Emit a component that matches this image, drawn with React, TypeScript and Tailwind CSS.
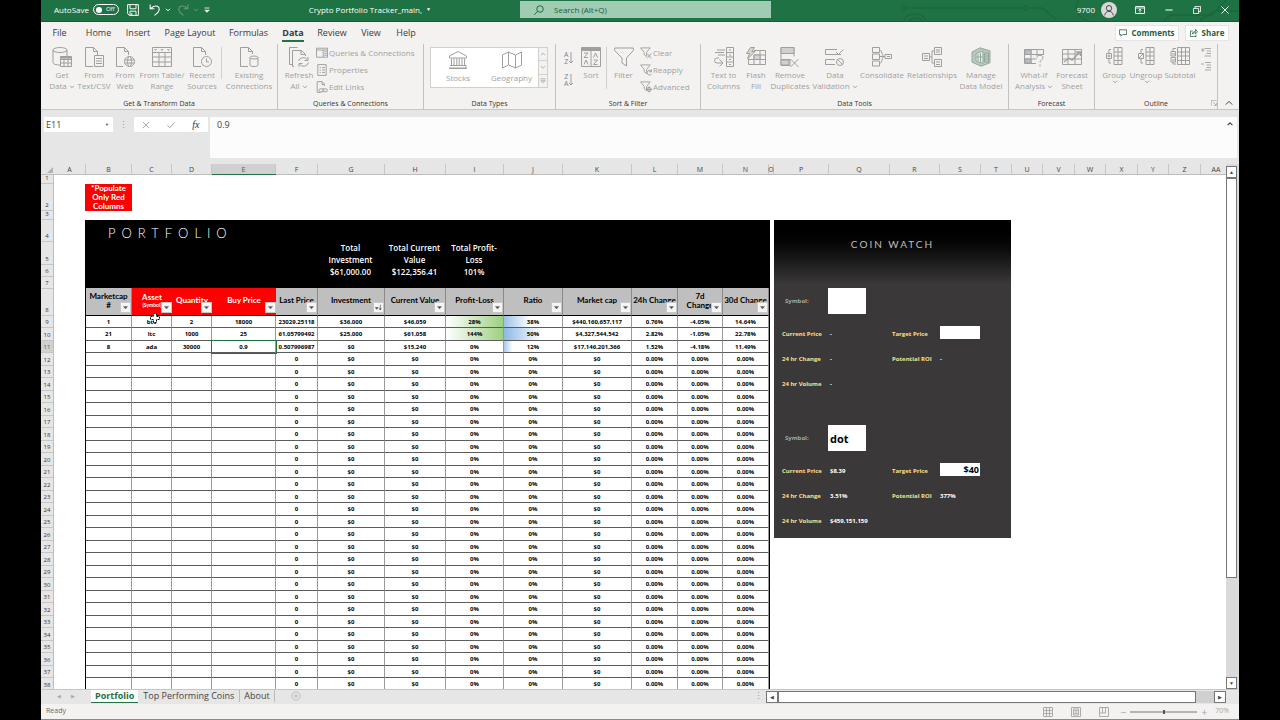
import type { ReactNode } from "react"
import { clsx } from "clsx"

type IconProps = {
  children: ReactNode
  className?: string
}

function Icon({ children, className = "size-5" }: IconProps) {
  return (
    <svg
      viewBox="0 0 20 20"
      fill="none"
      stroke="currentColor"
      strokeWidth="1"
      aria-hidden="true"
      className={clsx("shrink-0", className)}
    >
      {children}
    </svg>
  )
}

const icons = {
  getData: (
    <Icon>
      <ellipse cx="8" cy="3" rx="7" ry="2.500" />
      <path d="M1 3v12.500c0 1.500 3 2.500 7 2.500M15 3v6" />
      <path d="M8.500 9.500h11v10h-11zM8.500 12.500h11M8.500 16h11M12 9.500v10M16 9.500v10" />
      <path d="M8.500 10.500h11" strokeWidth="2" />
    </Icon>
  ),
  fromText: (
    <Icon>
      <path d="M9 19.500H1.500V.5h8l4 4V8M9.500.5v4h4" />
      <path d="M10.500 8.500h9v11h-9zM12 11.500h6M12 14h6M12 16.500h6" />
    </Icon>
  ),
  fromWeb: (
    <Icon>
      <path d="M8 19.500H1.500V.5h8l4 4V8M9.500.5v4h4" />
      <circle cx="14.500" cy="14.500" r="5" />
      <ellipse cx="14.500" cy="14.500" rx="2" ry="5" />
      <path d="M9.500 13h10M9.500 16h10" />
    </Icon>
  ),
  fromTable: (
    <Icon>
      <path d="M.5.5h19v19H.5zM.5 5.500h19M.5 10h19M.5 15h19M7 5v14.500M13 5v14.500" />
      <path d="m2.500 2 1 1.500 1-1.500M9 2l1 1.500L11 2M15.500 2l1 1.500 1-1.500" />
    </Icon>
  ),
  recent: (
    <Icon>
      <path d="M9 19.500H1.500V.5h8l4 4V8M9.500.5v4h4" />
      <circle cx="14.500" cy="14.500" r="5" />
      <path d="M14.500 11.500v3.500h2.500" />
    </Icon>
  ),
  existing: (
    <Icon>
      <path d="M9 19.500H1.500V.5h8l4 4V7M9.500.5v4h4" />
      <ellipse cx="15" cy="10.500" rx="4" ry="1.500" />
      <path d="M11 10.500v7.500c0 1 1.500 1.500 4 1.500s4-.5 4-1.500v-7.500" />
    </Icon>
  ),
  refresh: (
    <Icon>
      <path d="M3 17.500H.5V.5h8M5 19.500H3.500v-16h9l4 4V9M12 3.500v4h4" />
      <path d="M9.500 14a5 5 0 0 1 9-1M19 10v3.500h-3.500M19.500 15.500a5 5 0 0 1-9 1.500M10 19.800v-3.300h3.500" />
    </Icon>
  ),
  queries: (
    <Icon className="size-3">
      <path d="M.8 2h18.400v15H.8zM.8 5h18.400M12 5v12" strokeWidth="1.600" />
      <path d="M14 8h4M14 11h4M14 14h4" strokeWidth="1.600" />
    </Icon>
  ),
  properties: (
    <Icon className="size-3">
      <path d="M3 1h14v18H3zM6 6h2M10 6h5M6 10h2M10 10h5M6 14h2M10 14h5" strokeWidth="1.600" />
    </Icon>
  ),
  editLinks: (
    <Icon className="size-3">
      <path d="M8 19H2V1h8l4 4v3M10 1v5h4" strokeWidth="1.600" />
      <rect x="5" y="13" width="8" height="5" rx="2.500" strokeWidth="1.600" />
      <rect x="11" y="13" width="8" height="5" rx="2.500" strokeWidth="1.600" />
    </Icon>
  ),
  stocks: (
    <Icon>
      <path d="m10 1.500 8.500 4.500v2h-17V6zM3.500 8.500v7M6 8.500v7M8.800 8.500v7M11.200 8.500v7M14 8.500v7M16.500 8.500v7M2 15.500h16v2.500H1M1 18.500h18" />
    </Icon>
  ),
  geography: (
    <Icon>
      <path d="M.5 5 6.500 2l7 3 6-3v13l-6 3-7-3-6 3zM6.500 2v13M13.500 5v13" />
    </Icon>
  ),
  sort: (
    <Icon>
      <path d="M.5.500h19v19H.5zM.5 3.500h19M10 3.500v16" />
      <path d="M1 2h18" strokeWidth="2" />
      <path d="M3 6h4l-4 4.500h4M3 17.500 5 13l2 4.500M12.500 10.500l2-4.500 2 4.500M12.500 13h4l-4 4.500h4" />
    </Icon>
  ),
  filter: (
    <Icon>
      <path d="M.7 1h18.600v2.500L12.500 11v8L8 16v-5L.7 3.500z" />
    </Icon>
  ),
  textToColumns: (
    <Icon>
      <path d="M12.500.5h7v19h-7zM12.500 5.500h7M12.500 10h7M12.500 15h7M15 3h2M15 8h2M15 12.500h2M15 17.500h2M3 3h8M1 5.500h9M4 8h7" />
      <path d="M5 11H3a2.500 2.500 0 0 0 0 5h5M5.500 12.500 9 16l-3.500 3.500" />
    </Icon>
  ),
  flashFill: (
    <Icon>
      <path d="M8 3.500h11.500v14h-17V12M2.500 12.500h17M8 8h11.500M8 8v9.500M14 3.500v14" />
      <path d="M8 8h6v4.500H8z" fill="#cdd4dc" />
      <path d="M4.500.5h4L6 4.500h3L1.500 12l2-5.500h-3z" fill="#ddd3c4" />
    </Icon>
  ),
  removeDuplicates: (
    <Icon>
      <path d="M1 .5h13v6H1zM1 12.500h9v6H1zM1 6.500v6M14 6.500v3" />
      <path d="M1 .5h13v6H1z" fill="#d0d0d0" />
      <path d="M1 13h8v5H1z" fill="#d0d0d0" />
      <path d="m10.500 12 8 8M18.500 12l-8 8" />
    </Icon>
  ),
  dataValidation: (
    <Icon>
      <path d="M12 2.500H.5v5H16M18.500 2.500l-5 5-2.500-2.500M10 12.500H.5v5H10" />
      <circle cx="15" cy="15" r="3.500" />
      <path d="m12.500 12.500 5 5" />
    </Icon>
  ),
  consolidate: (
    <Icon>
      <path d="M.5.5h7v5h-7zM.5 7h7v5.500h-7zM.5 14h7v5h-7zM13 7.500h6.500v4H13zM7.500 3c3 0 2 6.500 5 6.500M7.500 16.500c3 0 2-7 5-7M7.500 9.500H13M15 9.500h3" />
    </Icon>
  ),
  relationships: (
    <Icon>
      <path d="M.5 6.500h7v7h-7zM12.500.5h7v7h-7zM12.500 12.500h7v7h-7zM7.500 10H10V4h2.500M10 10v6h2.500M2 9h4M2 11.500h4M14 3h4M14 5h4M14 15h4M14 17.500h4" />
    </Icon>
  ),
  manageModel: (
    <Icon>
      <path d="M1 5 9 .8l10 3v12l-9 3.400-9-4z" fill="#b9c9be" stroke="#94a99c" />
      <path d="M5 6.500 12 4v12.500L5 14z" fill="#e5ece7" stroke="#94a99c" />
      <path d="M7 7v7M9.500 6v9M5 10h7M13.500 6h4v9h-4zM13.500 9h4M13.500 12h4" stroke="#94a99c" />
    </Icon>
  ),
  whatIf: (
    <Icon>
      <path d="M12 16.500H.5v-14h19V8M.5 7.500h19M.5 12h12M7 2.500v14M13 2.500V9" />
      <path d="M1 3h6v4.500H1zM1 12h6v4H1z" fill="#b9bfca" />
      <path d="M13 10.500c0-3 6-3 6 0 0 2.500-3 2-3 5M16 17.500v2" />
    </Icon>
  ),
  forecastSheet: (
    <Icon>
      <path d="M.5 2.500h19v15H.5zM.5 7h19M.5 12h19M6 2.500v15M13 2.500v15" />
      <path d="m2 15 5-4 3 2 8-8M14 5h4.500v4" strokeWidth="1.400" />
    </Icon>
  ),
  group: (
    <Icon>
      <path d="M10 .5h8v17h-8zM10 5h8M10 9h8M10 13.500h8M14 .5v17M7 2.500H5v4M5 12v4h2M2.500 6.500h5v5h-5zM3.500 9h3M5 7.500v3" />
    </Icon>
  ),
  ungroup: (
    <Icon>
      <path d="M10 .5h8v17h-8zM10 5h8M10 9h8M10 13.500h8M14 .5v17M7 2.500H5v4M5 12v4h2M2.500 6.500h5v5h-5zM2.500 11.500l5-5" />
    </Icon>
  ),
  subtotal: (
    <Icon>
      <path d="M7.500.5h12v17h-12zM7.500 5h12M7.500 9h12M7.500 13.500h12M11.500.5v17M15.500.5v17M6 1.500H3v3M3 15v2h3M1 4.500h4.500V9H1zM1 10.500h4.500V15H1zM2 7h3M2 13h3" />
    </Icon>
  ),
}

function SmallFilter({ children }: { children: ReactNode }) {
  return (
    <Icon className="size-3">
      <path d="M1 1.500h16L11 9v7l-4-3V9z" strokeWidth="1.500" />
      <g strokeWidth="1.600">{children}</g>
    </Icon>
  )
}

function Chevron() {
  return (
    <svg viewBox="0 0 6 4" fill="none" stroke="currentColor" className="ml-0.5 inline-block h-1 w-1.5" aria-hidden="true">
      <path d="m1 .8 2 2 2-2" />
    </svg>
  )
}

type BigButtonProps = {
  icon: ReactNode
  lines: string[]
  width: string
  menu?: boolean
}

function BigButton({ icon, lines, width, menu }: BigButtonProps) {
  return (
    <button type="button" className={clsx("flex shrink-0 flex-col items-center whitespace-nowrap", width)}>
      {icon}
      <span className="mt-0.5 flex flex-col items-center leading-[11px]">
        {lines.map((line, index) => (
          <span key={line}>
            {line}
            {menu && lines.length > 1 && index === lines.length - 1 && <Chevron />}
          </span>
        ))}
        {menu && lines.length === 1 && <Chevron />}
      </span>
    </button>
  )
}

function SmallButton({ icon, label }: { icon: ReactNode; label: string }) {
  return (
    <button type="button" className="flex h-3 items-center gap-px whitespace-nowrap">
      {icon}
      {label}
    </button>
  )
}

type RibbonGroupProps = {
  label: string
  width: string
  children: ReactNode
}

function RibbonGroup({ label, width, children }: RibbonGroupProps) {
  return (
    <section className={clsx("flex shrink-0 flex-col border-r border-[#c3c2c0]", width)}>
      <div className="flex h-[54px] items-start pt-[3px]">{children}</div>
      <h2 className="text-center text-[7px] leading-3 text-[#333]">{label}</h2>
    </section>
  )
}

function TitleBar() {
  return (
    <header className="relative flex h-[22px] shrink-0 items-center border-b border-[#1a5c38] bg-[#1f7244] pb-0.5 text-[8px] text-white">
      <svg
        viewBox="0 0 340 21"
        fill="none"
        stroke="#1b683d"
        strokeWidth="1.500"
        className="absolute top-0 right-0 h-[21px] w-[340px]"
        aria-hidden="true"
      >
        <circle cx="5" cy="8" r="2" />
        <path d="M7 8h116M129 8h14l15 12M5 20c4-8 18-8 22 0M10 21c3-4 10-4 13 0" />
        <circle cx="126" cy="8" r="2" />
        <path d="M180 0c-6 8 0 20 10 21M265 21l6-6h42l14-15M300 21l16-10h24" />
      </svg>
      <div className="relative flex w-[479px] shrink-0 items-center pl-[13px]">
        <span id="autosave">AutoSave</span>
        <button
          type="button"
          role="switch"
          aria-checked="false"
          aria-labelledby="autosave"
          className="ml-1 flex h-[11px] w-[26px] items-center gap-1 rounded-full border border-white pl-0.5 text-[6px]"
        >
          <span className="size-1.5 rounded-full bg-white" />
          Off
        </button>
        <button type="button" aria-label="Save" className="ml-2">
          <Icon className="size-3">
            <path d="M1 1h18v18H4l-3-3zM5 1v7h10V1M5 19v-7h10v7M8 15v4" strokeWidth="1.600" />
          </Icon>
        </button>
        <button type="button" aria-label="Undo" className="ml-2.5 flex items-center gap-0.5">
          <Icon className="size-3">
            <path d="M2 1v7h7M2.500 8C8 1 17 2 17 9c0 4-3 6-8 10" strokeWidth="1.800" />
          </Icon>
          <Chevron />
        </button>
        <button type="button" aria-label="Redo" className="ml-1.5 flex items-center gap-0.5 opacity-30">
          <Icon className="size-3">
            <path d="M18 1v7h-7M17.500 8C12 1 3 2 3 9c0 4 3 6 8 10" strokeWidth="1.800" />
          </Icon>
          <Chevron />
        </button>
        <button type="button" aria-label="Customize toolbar" className="ml-1">
          <Icon className="size-2">
            <path d="M4 5h12" strokeWidth="2" />
            <path d="M4 10h12l-6 6z" fill="currentColor" />
          </Icon>
        </button>
        <button type="button" className="mr-[89px] ml-auto flex items-center gap-1 whitespace-nowrap">
          Crypto Portfolio Tracker_main,
          <span className="text-[5px]">▼</span>
        </button>
      </div>
      <label className="relative flex h-[17px] w-[251px] items-center gap-2.5 bg-[#9fccb2] pl-3.5 text-[#1c5e39]">
        <Icon className="size-2.5">
          <circle cx="12" cy="8" r="6.500" strokeWidth="1.800" />
          <path d="m7.500 12.500-7 7" strokeWidth="1.800" />
        </Icon>
        <input
          aria-label="Search"
          placeholder="Search (Alt+Q)"
          className="w-full bg-transparent outline-none placeholder:text-[#1c5e39]"
        />
      </label>
      <div className="relative ml-auto flex items-center pr-2.5">
        <span>9700</span>
        <span className="ml-1.5 grid size-4 place-items-center rounded-full bg-[#d9d9d9] text-[#444]">
          <Icon className="size-3">
            <circle cx="10" cy="7" r="4.500" strokeWidth="1.600" />
            <path d="M3 19c0-9 14-9 14 0" strokeWidth="1.600" />
          </Icon>
        </span>
        <button type="button" aria-label="Ribbon display" className="ml-[18px]">
          <Icon className="size-2.5">
            <path d="M1 3h18v14H1zM1 6h18M10 15V8M7 11l3-3 3 3" strokeWidth="1.800" />
          </Icon>
        </button>
        <button type="button" aria-label="Minimize" className="ml-5">
          <Icon className="size-2">
            <path d="M1 10h18" strokeWidth="2.500" />
          </Icon>
        </button>
        <button type="button" aria-label="Restore" className="ml-5">
          <Icon className="size-2">
            <path d="M1 6h13v13H1zM5 6V1h14v13h-5" strokeWidth="2.200" />
          </Icon>
        </button>
        <button type="button" aria-label="Close" className="ml-5">
          <Icon className="size-2">
            <path d="m1 1 18 18M19 1 1 19" strokeWidth="2.400" />
          </Icon>
        </button>
      </div>
    </header>
  )
}

const menuTabs = [
  { label: "File", width: "w-[37px]" },
  { label: "Home", width: "w-[41px]" },
  { label: "Insert", width: "w-[38px]" },
  { label: "Page Layout", width: "w-[66px]" },
  { label: "Formulas", width: "w-[51px]" },
  { label: "Data", width: "w-[38px]" },
  { label: "Review", width: "w-[40px]" },
  { label: "View", width: "w-[38px]" },
  { label: "Help", width: "w-[32px]" },
]

function MenuTabs() {
  return (
    <nav className="flex h-[22px] shrink-0 items-center pt-px text-[9px] text-[#3b3a39]">
      {menuTabs.map((tab) => (
        <a key={tab.label} href="#" className={clsx("flex justify-center whitespace-nowrap", tab.width)}>
          <span
            className={clsx(
              "border-b-2 leading-[14px]",
              tab.label === "Data" ? "border-[#217346] font-bold" : "border-transparent",
            )}
          >
            {tab.label}
          </span>
        </a>
      ))}
      <div className="ml-auto flex gap-1.5 pr-2.5 pb-px text-[8px] font-bold text-[#1f5f3c]">
        <button type="button" className="flex h-4 w-16 items-center justify-center gap-1 border border-[#e5e5e5] bg-white">
          <Icon className="size-2">
            <path d="M1 2h18v12H9l-4 4v-4H1z" strokeWidth="2" />
          </Icon>
          Comments
        </button>
        <button type="button" className="flex h-4 w-11 items-center justify-center gap-1 border border-[#e5e5e5] bg-white">
          <Icon className="size-2">
            <path d="M7 5H1v14h14v-5M6 13c0-5 4-7 8-7V1l5 6-5 5V9c-4 0-6 1-8 4z" strokeWidth="2" />
          </Icon>
          Share
        </button>
      </div>
    </nav>
  )
}

function SortArrow({ from, to }: { from: string; to: string }) {
  return (
    <span className="flex items-center">
      <span className="flex flex-col text-[7px] leading-[7px] text-[#75859a]">
        <span>{from}</span>
        <span>{to}</span>
      </span>
      <svg viewBox="0 0 6 12" fill="none" stroke="currentColor" className="h-3 w-1.5" aria-hidden="true">
        <path d="M3 0v11M1 9l2 2 2-2" />
      </svg>
    </span>
  )
}

function Ribbon() {
  return (
    <div className="flex h-[66px] shrink-0 items-start overflow-hidden border-b border-[#c8c6c4] text-[8px] text-[#a19f9d]">
      <RibbonGroup label="Get & Transform Data" width="w-[237px]">
        <BigButton icon={icons.getData} lines={["Get", "Data"]} width="w-[38px] pl-1" menu />
        <BigButton icon={icons.fromText} lines={["From", "Text/CSV"]} width="w-[30px]" />
        <BigButton icon={icons.fromWeb} lines={["From", "Web"]} width="w-[32px]" />
        <BigButton icon={icons.fromTable} lines={["From Table/", "Range"]} width="w-[42px]" />
        <BigButton icon={icons.recent} lines={["Recent", "Sources"]} width="w-[38px]" />
        <span className="h-8 w-px bg-[#d2d0ce]" />
        <BigButton icon={icons.existing} lines={["Existing", "Connections"]} width="w-[54px]" />
      </RibbonGroup>
      <RibbonGroup label="Queries & Connections" width="w-[146px]">
        <BigButton icon={icons.refresh} lines={["Refresh", "All"]} width="w-[38px] pl-1" menu />
        <div className="flex flex-col gap-[5px]">
          <SmallButton icon={icons.queries} label="Queries & Connections" />
          <SmallButton icon={icons.properties} label="Properties" />
          <SmallButton icon={icons.editLinks} label="Edit Links" />
        </div>
      </RibbonGroup>
      <RibbonGroup label="Data Types" width="w-[132px]">
        <div className="ml-1.5 flex h-[41px] border border-[#d2d0ce] bg-white">
          <div className="flex pt-0.5">
            <BigButton icon={icons.stocks} lines={["Stocks"]} width="w-[54px]" />
            <BigButton icon={icons.geography} lines={["Geography"]} width="w-[53px]" />
          </div>
          <div className="flex w-[9px] flex-col divide-y divide-[#d2d0ce] border-l border-[#d2d0ce] bg-[#f3f2f1]">
            <button type="button" aria-label="Previous types" className="grid flex-1 place-items-center">
              <Icon className="size-1.5"><path d="m3 14 7-7 7 7" strokeWidth="2.500" /></Icon>
            </button>
            <button type="button" aria-label="Next types" className="grid flex-1 place-items-center">
              <Icon className="size-1.5"><path d="m3 7 7 7 7-7" strokeWidth="2.500" /></Icon>
            </button>
            <button type="button" aria-label="More types" className="grid flex-1 place-items-center">
              <Icon className="size-1.5"><path d="M1 3h18M3 9l7 7 7-7z" strokeWidth="2.500" /></Icon>
            </button>
          </div>
        </div>
      </RibbonGroup>
      <RibbonGroup label="Sort & Filter" width="w-[145px]">
        <div className="flex w-5 flex-col gap-2 pt-1 pl-2">
          <button type="button" aria-label="Sort A to Z"><SortArrow from="A" to="Z" /></button>
          <button type="button" aria-label="Sort Z to A"><SortArrow from="Z" to="A" /></button>
        </div>
        <BigButton icon={icons.sort} lines={["Sort"]} width="w-[30px]" />
        <span className="h-[42px] w-px bg-[#d2d0ce]" />
        <BigButton icon={icons.filter} lines={["Filter"]} width="w-[33px]" />
        <div className="flex flex-col gap-[5px]">
          <SmallButton icon={<SmallFilter><path d="m12 11 7 8M19 11l-7 8" /></SmallFilter>} label="Clear" />
          <SmallButton icon={<SmallFilter><path d="M19 12a4 4 0 1 0 0 5M19 9v4h-4" /></SmallFilter>} label="Reapply" />
          <SmallButton icon={<SmallFilter><circle cx="15" cy="14" r="3.500" /><path d="M15 9v10M10 14h10" /></SmallFilter>} label="Advanced" />
        </div>
      </RibbonGroup>
      <RibbonGroup label="Data Tools" width="w-[308px]">
        <BigButton icon={icons.textToColumns} lines={["Text to", "Columns"]} width="w-[45px]" />
        <BigButton icon={icons.flashFill} lines={["Flash", "Fill"]} width="w-[20px]" />
        <BigButton icon={icons.removeDuplicates} lines={["Remove", "Duplicates"]} width="w-[48px]" />
        <BigButton icon={icons.dataValidation} lines={["Data", "Validation"]} width="w-[42px]" menu />
        <BigButton icon={icons.consolidate} lines={["Consolidate"]} width="w-[52px]" />
        <BigButton icon={icons.relationships} lines={["Relationships"]} width="w-[48px]" />
        <BigButton icon={icons.manageModel} lines={["Manage", "Data Model"]} width="w-[50px]" />
      </RibbonGroup>
      <RibbonGroup label="Forecast" width="w-[86px]">
        <BigButton icon={icons.whatIf} lines={["What-If", "Analysis"]} width="w-[50px]" menu />
        <BigButton icon={icons.forecastSheet} lines={["Forecast", "Sheet"]} width="w-[26px]" />
      </RibbonGroup>
      <RibbonGroup label="Outline" width="w-[123px]">
        <BigButton icon={icons.group} lines={["Group"]} width="w-[38px]" menu />
        <BigButton icon={icons.ungroup} lines={["Ungroup"]} width="w-[26px]" menu />
        <BigButton icon={icons.subtotal} lines={["Subtotal"]} width="w-[42px]" />
        <div className="flex flex-col gap-1">
          <button type="button" aria-label="Show detail">
            <Icon className="size-2.5"><path d="M0 6h7M3.500 2.500v7M7 3h13M11 8h9M11 13h9M7 18h13" strokeWidth="1.800" /></Icon>
          </button>
          <button type="button" aria-label="Hide detail">
            <Icon className="size-2.5"><path d="M0 6h6M8 3h12M11 8h9M11 13h9M8 18h12" strokeWidth="1.800" /></Icon>
          </button>
        </div>
        <button type="button" aria-label="Outline settings" className="-mb-2 self-end">
          <Icon className="size-1.5"><path d="M1 19V1h18M7 7l11 11M18 9v9H9" strokeWidth="2.400" /></Icon>
        </button>
      </RibbonGroup>
      <button type="button" aria-label="Collapse ribbon" className="ml-auto self-end pr-1.5 pb-0.5 text-[#444]">
        <Icon className="size-2"><path d="m2 14 8-8 8 8" strokeWidth="2.500" /></Icon>
      </button>
    </div>
  )
}

function FormulaBar() {
  return (
    <div className="flex h-[54px] shrink-0 items-start gap-0.5 bg-[#e6e6e6] pt-[7px] pr-0.5 pl-[3px] text-[9px] text-[#444]">
      <div className="flex h-[15px] w-[69px] items-center bg-white pr-1">
        <input aria-label="Name box" defaultValue="E11" className="w-full min-w-0 pl-0.5 outline-none" />
        <span className="text-[4px]">▼</span>
      </div>
      <span className="w-[17px] text-center leading-[15px] text-[#999]">⋮</span>
      <div className="flex h-[15px] w-[74px] items-center justify-around bg-white text-[#999]">
        <button type="button" aria-label="Cancel">
          <Icon className="size-2"><path d="m2 2 16 16M18 2 2 18" strokeWidth="2" /></Icon>
        </button>
        <button type="button" aria-label="Enter">
          <Icon className="size-2"><path d="m1 11 6 6L19 3" strokeWidth="2.200" /></Icon>
        </button>
        <button type="button" className="font-['Liberation_Serif'] text-[10px] text-[#333] italic">fx</button>
      </div>
      <div className="flex h-[41px] flex-1 items-start bg-[#fcfcfc]">
        <textarea
          aria-label="Formula"
          defaultValue="0.9"
          className="h-full flex-1 resize-none py-0.5 pl-[7px] leading-3 outline-none"
        />
        <button type="button" aria-label="Collapse formula bar" className="pt-1 pr-1">
          <Icon className="size-1.5"><path d="m2 14 8-8 8 8" strokeWidth="4" /></Icon>
        </button>
      </div>
    </div>
  )
}

const columns = [
  { name: "A", width: "w-[32px]" },
  { name: "B", width: "w-[46px]" },
  { name: "C", width: "w-[40px]" },
  { name: "D", width: "w-[40px]" },
  { name: "E", width: "w-[64px]" },
  { name: "F", width: "w-[42px]" },
  { name: "G", width: "w-[67px]" },
  { name: "H", width: "w-[61px]" },
  { name: "I", width: "w-[58px]" },
  { name: "J", width: "w-[59px]" },
  { name: "K", width: "w-[69px]" },
  { name: "L", width: "w-[46px]" },
  { name: "M", width: "w-[45px]" },
  { name: "N", width: "w-[46px]" },
  { name: "O", width: "w-[5px]" },
  { name: "P", width: "w-[55px]" },
  { name: "Q", width: "w-[61px]" },
  { name: "R", width: "w-[50px]" },
  { name: "S", width: "w-[41px]" },
  { name: "T", width: "w-[31px]" },
  { name: "U", width: "w-[31px]" },
  { name: "V", width: "w-[32px]" },
  { name: "W", width: "w-[31px]" },
  { name: "X", width: "w-[32px]" },
  { name: "Y", width: "w-[31px]" },
  { name: "Z", width: "w-[32px]" },
  { name: "AA", width: "w-[31px]" },
]

function ColumnHeaders() {
  return (
    <div className="flex h-[11px] shrink-0 border-b border-[#bdbdbd] bg-[#e6e6e6] text-[7px] leading-3 text-[#444]">
      <span className="flex w-[13px] shrink-0 items-end justify-end p-px">
        <svg viewBox="0 0 6 6" className="size-1.5" aria-hidden="true">
          <path d="M6 0v6H0z" fill="#b1b1b1" />
        </svg>
      </span>
      {columns.map((column) => (
        <span
          key={column.name}
          className={clsx(
            "flex shrink-0 justify-center border-r border-[#c6c6c6]",
            column.width,
            column.name === "E" && "bg-[#d0d0d0] text-[#217346] shadow-[0_1px_0_#217346]",
          )}
        >
          {column.name}
        </span>
      ))}
    </div>
  )
}

const topRows = ["h-[9px]", "h-[27px]", "h-[9px]", "h-[22px]", "h-[23px]", "h-[12px]", "h-[12px]", "h-[27px]"]
const bodyRowNumbers = Array.from({ length: 30 }, (_, index) => index + 9)

function bodyRowHeight(row: number) {
  return row % 2 === 1 ? "h-[12px]" : "h-[13px]"
}

function RowHeaders() {
  return (
    <div className="flex w-[13px] shrink-0 flex-col border-r border-[#bdbdbd] bg-[#e6e6e6] text-[6px] leading-[9px] text-[#333]">
      {[...topRows, ...bodyRowNumbers.map(bodyRowHeight)].map((height, index) => (
        <span
          key={index}
          className={clsx(
            "flex shrink-0 items-end justify-center border-b border-[#c6c6c6]",
            height,
            index === 10 && "bg-[#d0d0d0] text-[#217346]",
          )}
        >
          {index + 1}
        </span>
      ))}
    </div>
  )
}

type Holding = {
  rank: string
  symbol: string
  quantity: string
  buyPrice: string
  lastPrice: string
  investment: string
  value: string
  profit: string
  ratio: string
  marketCap: string
  day: string
  week: string
  month: string
}

const holdings: Holding[] = [
  {
    rank: "1", symbol: "btc", quantity: "2", buyPrice: "18000", lastPrice: "23029.25118",
    investment: "$36,000", value: "$46,059", profit: "28%", ratio: "38%",
    marketCap: "$440,160,657,117", day: "0.76%", week: "-4.05%", month: "14.64%",
  },
  {
    rank: "21", symbol: "ltc", quantity: "1000", buyPrice: "25", lastPrice: "61.05799492",
    investment: "$25,000", value: "$61,058", profit: "144%", ratio: "50%",
    marketCap: "$4,327,544,542", day: "2.82%", week: "-1.05%", month: "22.78%",
  },
  {
    rank: "8", symbol: "ada", quantity: "30000", buyPrice: "0.9", lastPrice: "0.507996987",
    investment: "$0", value: "$15,240", profit: "0%", ratio: "12%",
    marketCap: "$17,146,201,366", day: "1.52%", week: "-4.18%", month: "11.49%",
  },
]

const emptyHolding: Holding = {
  rank: "", symbol: "", quantity: "", buyPrice: "", lastPrice: "0",
  investment: "$0", value: "$0", profit: "0%", ratio: "0%",
  marketCap: "$0", day: "0.00%", week: "0.00%", month: "0.00%",
}

const fields = [
  { key: "rank", title: "Marketcap #", input: false },
  { key: "symbol", title: "Asset", note: "(Symbol)", input: true },
  { key: "quantity", title: "Quantity", input: true },
  { key: "buyPrice", title: "Buy Price", input: true },
  { key: "lastPrice", title: "Last Price", input: false },
  { key: "investment", title: "Investment", input: false },
  { key: "value", title: "Current Value", input: false },
  { key: "profit", title: "Profit-Loss", input: false },
  { key: "ratio", title: "Ratio", input: false },
  { key: "marketCap", title: "Market cap", input: false },
  { key: "day", title: "24h Change", input: false },
  { key: "week", title: "7d Change", input: false },
  { key: "month", title: "30d Change", input: false },
] as const

function FilterButton({ title, sorted }: { title: string; sorted: boolean }) {
  return (
    <button
      type="button"
      aria-label={`Filter ${title}`}
      className="absolute right-0 bottom-0.5 grid size-[11px] place-items-center border border-[#c8c8c8] bg-[#f5f5f5] text-[#555]"
    >
      <Icon className="size-[7px]">
        {sorted ? (
          <path d="M1 10h8l-4 5zM15 2v15M12 13l3 4 3-4" fill="currentColor" strokeWidth="2" />
        ) : (
          <path d="M4 7h12l-6 7z" fill="currentColor" />
        )}
      </Icon>
    </button>
  )
}

function Totals() {
  const totals = [
    { label: "Total Investment", value: "$61,000.00", width: "w-[67px]" },
    { label: "Total Current Value", value: "$122,356.41", width: "w-[61px]" },
    { label: "Total Profit-Loss", value: "101%", width: "w-[58px]" },
  ]
  return (
    <div className="h-[68px] bg-black text-white">
      <h1 className="pt-1 pl-[22px] font-['Lato'] text-[13px] leading-[18px] font-light tracking-[6px]">PORTFOLIO</h1>
      <dl className="ml-[231px] flex text-center text-[8px] leading-3 font-semibold">
        {totals.map((total) => (
          <div key={total.label} className={clsx("shrink-0 px-1", total.width)}>
            <dt>{total.label}</dt>
            <dd>{total.value}</dd>
          </div>
        ))}
      </dl>
    </div>
  )
}

function PortfolioTable() {
  const rows = bodyRowNumbers.map((number, index) => ({ number, ...(holdings[index] ?? emptyHolding) }))
  return (
    <table className="w-[683px] table-fixed border-separate border-spacing-0 text-[6px] font-bold text-black">
      <colgroup>
        {columns.slice(1, 14).map((column) => (
          <col key={column.name} className={column.width} />
        ))}
      </colgroup>
      <thead className="font-['Lato'] text-[8px]">
        <tr className="h-[28px]">
          {fields.map((field) => (
            <th
              key={field.key}
              className={clsx(
                "relative border-b border-black py-0 pb-0.5 leading-[9px] font-bold",
                field.input ? "bg-[#fe0000] text-white" : "border-r border-r-[#8a8a8a] bg-[#bfbfbf]",
                field.key === "rank" && "px-0.5",
                field.key === "week" && "px-2",
                field.key !== "rank" && field.key !== "week" && "px-0 whitespace-nowrap",
              )}
            >
              {field.title}
              {"note" in field && <span className="block text-[5px] leading-[6px]">{field.note}</span>}
              <FilterButton title={field.title} sorted={field.key === "investment"} />
            </th>
          ))}
        </tr>
      </thead>
      <tbody>
        {rows.map((row) => (
          <tr key={row.number} className={bodyRowHeight(row.number)}>
            {fields.map((field) => (
              <td
                key={field.key}
                className={clsx(
                  "border-r border-b border-r-[#9a9a9a] border-b-[#5c5c5c] p-0 text-center leading-[10px]",
                  field.key === "profit" && row.number < 11 && "bg-linear-to-r from-white to-[#9fd082]",
                  field.key === "ratio" && row.number === 9 && "bg-linear-to-r from-[#9bc2e6] to-white to-45%",
                  field.key === "ratio" && row.number === 10 && "bg-linear-to-r from-[#8db9e2] to-white to-65%",
                  field.key === "ratio" && row.number === 11 && "bg-linear-to-r from-[#a9c9e8] to-white to-15%",
                  field.key === "buyPrice" && row.number === 11 && "outline outline-[#217346]",
                )}
              >
                {row[field.key]}
              </td>
            ))}
          </tr>
        ))}
      </tbody>
    </table>
  )
}

type Coin = {
  symbol: string
  price: string
  change: string
  volume: string
  target: string
  roi: string
}

const coins: Coin[] = [
  { symbol: "", price: "-", change: "-", volume: "-", target: "", roi: "-" },
  { symbol: "dot", price: "$8.39", change: "3.51%", volume: "$459,151,159", target: "$40", roi: "377%" },
]

function CoinCard({ coin }: { coin: Coin }) {
  return (
    <div className="flex flex-col gap-2">
      <label className="flex h-[26px] items-center text-[#a6a6a6]">
        <span className="w-[54px] pl-[11px]">Symbol:</span>
        <input
          defaultValue={coin.symbol}
          className="h-full w-[38px] bg-white pl-0.5 text-[11px] text-black outline-none"
        />
      </label>
      <div className="grid auto-rows-[25px] grid-cols-[48px_62px_48px_auto] items-center pl-2 text-white">
        <span className="text-[#f5e08c]">Current Price</span>
        <span>{coin.price}</span>
        <label htmlFor={`target-${coin.symbol}`} className="text-[#f5e08c]">Target Price</label>
        <input
          id={`target-${coin.symbol}`}
          defaultValue={coin.target}
          className="mb-1 h-[13px] w-10 bg-white pr-px text-right text-[9px] text-black outline-none"
        />
        <span className="text-[#f5e08c]">24 hr Change</span>
        <span>{coin.change}</span>
        <span className="text-[#f5e08c]">Potential ROI</span>
        <span>{coin.roi}</span>
        <span className="text-[#f5e08c]">24 hr Volume</span>
        <span>{coin.volume}</span>
      </div>
    </div>
  )
}

function CoinWatch() {
  return (
    <section className="ml-1 h-[318px] w-[237px] shrink-0 bg-[#3a3838] bg-linear-to-b from-black to-[#3a3838] to-20% text-[6px] font-bold">
      <h2 className="h-[68px] pt-4 text-center font-['Lato'] text-[10px] leading-4 font-normal tracking-[2px] text-[#bfbfbf]">
        COIN WATCH
      </h2>
      <div className="flex flex-col gap-7">
        {coins.map((coin) => (
          <CoinCard key={coin.symbol} coin={coin} />
        ))}
      </div>
    </section>
  )
}

function Sheet() {
  return (
    <div className="flex min-h-0 flex-1 overflow-hidden">
      <div className="flex min-w-0 flex-1 flex-col overflow-hidden bg-white">
        <ColumnHeaders />
        <div className="flex min-h-0 flex-1 overflow-hidden">
          <RowHeaders />
          <div className="shrink-0 pt-[9px] pl-[31px]">
            <p className="flex h-[27px] w-[47px] items-center bg-[#fe0000] px-1 text-center font-['Lato'] text-[8px] leading-[9px] font-bold text-white">
              *Populate Only Red Columns
            </p>
            <div className="mt-[9px] flex items-start">
              <div className="relative border-r border-l border-black">
                <Totals />
                <PortfolioTable />
                <svg
                  viewBox="0 0 10 10"
                  className="absolute top-[93px] left-16 size-2.5"
                  fill="white"
                  stroke="black"
                  aria-hidden="true"
                >
                  <path d="M3.500.5h3v3h3v3h-3v3h-3v-3h-3v-3h3z" strokeDasharray="2 1" />
                </svg>
              </div>
              <CoinWatch />
            </div>
          </div>
        </div>
      </div>
      <div className="flex w-[13px] shrink-0 flex-col bg-[#dadada] pt-0.5 pr-0.5 text-[5px] text-[#444]">
        <button type="button" aria-label="Scroll up" className="h-3 border border-[#777] bg-white leading-[9px]">▲</button>
        <div className="min-h-0 flex-[4] border border-[#777] bg-white" />
        <div className="min-h-0 flex-1" />
        <button type="button" aria-label="Scroll down" className="h-3 border border-[#777] bg-white leading-[9px]">▼</button>
      </div>
    </div>
  )
}

function SheetTabs() {
  return (
    <div className="flex h-[15px] shrink-0 items-start border-t border-[#c6c6c6] bg-[#e6e6e6] text-[9px] leading-3 text-[#444]">
      <div className="flex w-[50px] justify-center gap-2.5 text-[5px] text-[#aaa]">
        <button type="button" aria-label="Previous sheet">◀</button>
        <button type="button" aria-label="Next sheet">▶</button>
      </div>
      <a href="#" className="border-b border-[#217346] bg-white px-1 font-bold text-[#217346]">
        Portfolio
      </a>
      <a href="#" className="border-r border-[#bbb] px-[5px]">Top Performing Coins</a>
      <a href="#" className="border-r border-[#bbb] px-1">About</a>
      <button type="button" aria-label="New sheet" className="mt-px ml-4 text-[#b5b5b5]">
        <Icon className="size-2.5">
          <circle cx="10" cy="10" r="8.500" strokeWidth="1.600" />
          <path d="M10 5v10M5 10h10" strokeWidth="1.600" />
        </Icon>
      </button>
      <span className="ml-auto w-4 text-center text-[#999]">⋮</span>
      <div className="mt-px mr-[13px] flex h-3 w-[460px] text-[5px] leading-[9px]">
        <button type="button" aria-label="Scroll left" className="w-3 border border-[#777] bg-white">◀</button>
        <div className="flex-1 border border-[#777] bg-white" />
        <div className="w-[18px] bg-[#d0d0d0]" />
        <button type="button" aria-label="Scroll right" className="w-3 border border-[#777] bg-white">▶</button>
      </div>
    </div>
  )
}

function StatusBar() {
  return (
    <footer className="flex h-4 shrink-0 items-center border-b border-[#8a8a8a] bg-[#f3f2f1] pr-2.5 pl-[5px] text-[7px] text-[#666]">
      <span>Ready</span>
      <div className="ml-auto flex items-center text-[#a5a5a5]">
        <button type="button" aria-label="Normal view">
          <Icon className="size-2.5"><path d="M1 1h18v18H1zM1 7h18M1 13h18M7 1v18M13 1v18" strokeWidth="1.800" /></Icon>
        </button>
        <button type="button" aria-label="Page layout view" className="ml-[18px]">
          <Icon className="size-2.5"><path d="M1 1h18v18H1zM5 4h10v12H5zM7 7h6M7 10h6M7 13h6" strokeWidth="1.800" /></Icon>
        </button>
        <button type="button" aria-label="Page break view" className="ml-[18px]">
          <Icon className="size-2.5"><path d="M1 1h18v18H1zM1 12h12V1M7 1v11" strokeWidth="1.800" /></Icon>
        </button>
        <button type="button" aria-label="Zoom out" className="ml-3 text-[10px] leading-3">−</button>
        <input
          type="range"
          aria-label="Zoom"
          defaultValue={50}
          className="mx-1 h-1 w-[67px] appearance-none bg-linear-to-b from-transparent from-25% via-[#777] via-50% to-transparent to-75% [&::-webkit-slider-thumb]:h-1 [&::-webkit-slider-thumb]:w-0.5 [&::-webkit-slider-thumb]:appearance-none [&::-webkit-slider-thumb]:bg-[#555]"
        />
        <button type="button" aria-label="Zoom in" className="text-[10px] leading-3">+</button>
        <span className="ml-2">70%</span>
      </div>
    </footer>
  )
}

export default function App() {
  return (
    <div className="h-screen overflow-hidden bg-black px-[41px] font-['Open_Sans',sans-serif]">
      <div className="flex h-full flex-col bg-[#f3f2f1]">
        <TitleBar />
        <MenuTabs />
        <Ribbon />
        <FormulaBar />
        <Sheet />
        <SheetTabs />
        <StatusBar />
      </div>
    </div>
  )
}
